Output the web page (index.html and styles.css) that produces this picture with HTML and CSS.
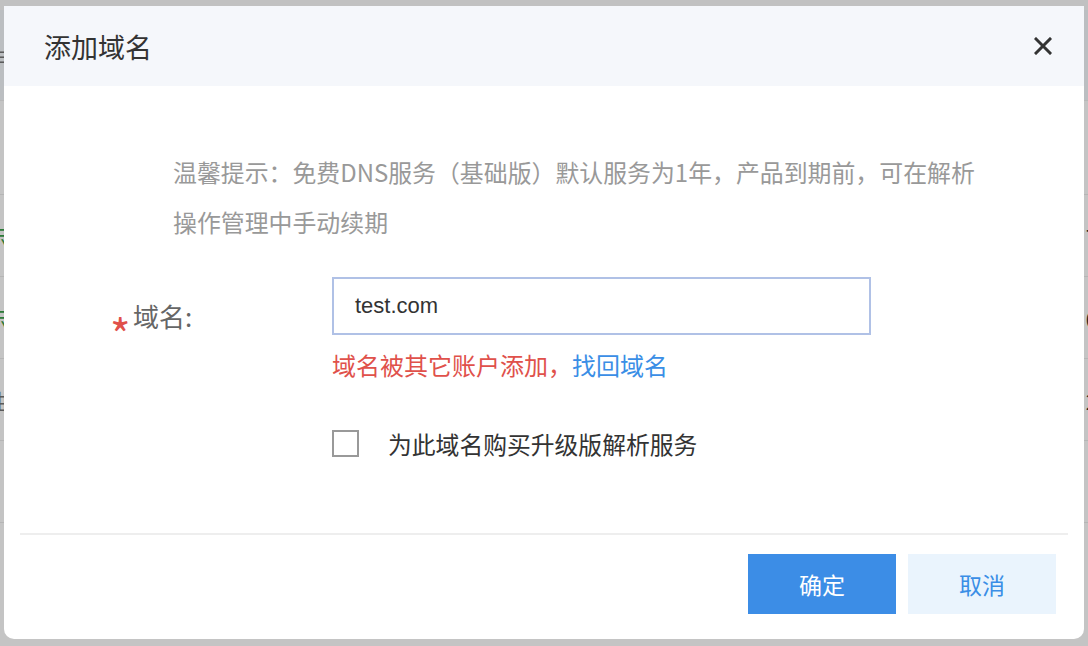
FILE: index.html
```html
<!DOCTYPE html>
<html lang="zh-CN">
<head>
    <meta charset="UTF-8">
    <title>添加域名</title>
    <link rel="stylesheet" href="styles.css">
</head>
<body>
    <div class="page">
        <div class="topbar"></div>
        <div class="toolbar"><span class="menu-lines">≡</span></div>
        <div class="table-head"></div>
        <div class="row"><span class="cell-left ok">示</span><span class="cell-right">7</span></div>
        <div class="row"><span class="cell-left ok">示</span><span class="cell-right">0</span></div>
        <div class="row"><span class="cell-left">曲</span><span class="cell-right">2</span></div>
        <div class="row"></div>
    </div>

    <div class="mask"></div>

    <div class="modal">
        <div class="modal-header">
            <span class="modal-title">添加域名</span>
            <svg class="close" width="18" height="18" viewBox="0 0 18 18">
                <path d="M2 2 L16 16 M16 2 L2 16" stroke="#333" stroke-width="3" stroke-linecap="square"/>
            </svg>
        </div>

        <div class="modal-body">
            <p class="tip">温馨提示：免费DNS服务（基础版）默认服务为1年，产品到期前，可在解析<br>操作管理中手动续期</p>

            <div class="form-row">
                <label class="form-label"><span class="required">*</span>域名:</label>
                <div class="field">
                    <div class="input">test.com</div>
                    <div class="error">域名被其它账户添加，<a class="link">找回域名</a></div>
                </div>
            </div>

            <div class="check-row">
                <span class="checkbox"></span>
                <span class="check-label">为此域名购买升级版解析服务</span>
            </div>
        </div>

        <div class="divider"></div>

        <div class="modal-footer">
            <button class="btn btn-primary">确定</button>
            <button class="btn btn-plain">取消</button>
        </div>
    </div>
</body>
</html>
```

FILE: styles.css
```css
body {
    margin: 0;
    width: 1088px;
    height: 646px;
    overflow: hidden;
    position: relative;
    font-family: "Noto Sans CJK SC", "Noto Sans", sans-serif;
    background: #fff;
}
.page {
    width: 1088px;
    height: 646px;
    overflow: hidden;
}
.topbar {
    height: 10px;
    background: #fbfbfb;
}
.toolbar {
    height: 90px;
    background: #f4f7fc;
    display: flex;
    align-items: center;
    border-bottom: 1px solid #f0f0f0;
}
.menu-lines {
    margin-left: -6px;
    font-size: 22px;
    color: #777;
}
.table-head {
    height: 93px;
    background: #fff;
    border-bottom: 1px solid #ececec;
}
.row {
    height: 81px;
    display: flex;
    align-items: center;
    justify-content: space-between;
    border-bottom: 1px solid #ececec;
    font-size: 22px;
    color: #333;
}
.cell-left {
    margin-left: -14px;
    color: #777;
}
.cell-left.ok {
    color: #3aa14a;
}
.cell-right {
    margin-right: -10px;
}
.mask {
    position: absolute;
    inset: 0;
    background: rgba(0, 0, 0, 0.23);
}
.modal {
    position: absolute;
    left: 4px;
    top: 6px;
    width: 1080px;
    background: #fff;
    border-radius: 0 0 10px 10px;
    overflow: hidden;
}
.modal-header {
    height: 80px;
    background: #f5f7fb;
    display: flex;
    align-items: center;
    justify-content: space-between;
    padding: 0 32px 0 40px;
}
.modal-title {
    font-size: 27px;
    color: #333;
}
.modal-body {
    padding-top: 61px;
}
.tip {
    margin: 0 0 0 169px;
    font-size: 23.9px;
    line-height: 50px;
    color: #999;
    white-space: nowrap;
}
.form-row {
    display: flex;
    margin-top: 30px;
}
.form-label {
    display: flex;
    align-items: flex-start;
    width: 222px;
    margin-left: 106px;
    padding-top: 26px;
    font-size: 26px;
    line-height: 26px;
    color: #666;
    box-sizing: border-box;
}
.required {
    color: #e0504a;
    font-size: 44px;
    line-height: 26px;
    width: 23px;
    margin-top: 17px;
}
.field {
    display: flex;
    flex-direction: column;
}
.input {
    width: 539px;
    height: 58px;
    box-sizing: border-box;
    border: 2px solid #b0c1e6;
    padding-left: 21px;
    font-family: "Liberation Sans", "Noto Sans CJK SC", sans-serif;
    font-size: 22px;
    line-height: 54px;
    color: #333;
}
.error {
    margin-top: 15px;
    font-size: 24px;
    line-height: 30px;
    color: #e0514b;
}
.link {
    color: #3a8ee6;
}
.check-row {
    display: flex;
    align-items: center;
    margin: 46px 0 0 328px;
}
.checkbox {
    width: 27px;
    height: 27px;
    box-sizing: border-box;
    border: 2px solid #999;
    background: #fff;
}
.check-label {
    margin-left: 29px;
    font-size: 23.8px;
    color: #333;
}
.divider {
    height: 2px;
    background: #eeeeee;
    margin: 72px 16px 0;
}
.modal-footer {
    display: flex;
    justify-content: flex-end;
    gap: 12px;
    padding: 19px 28px 25px 0;
}
.btn {
    width: 148px;
    height: 60px;
    border: none;
    font-family: "Noto Sans CJK SC", sans-serif;
    font-size: 23px;
    cursor: pointer;
}
.btn-primary {
    background: #3c8de6;
    color: #fff;
}
.btn-plain {
    background: #eaf4fd;
    color: #3a8ee6;
}
```
